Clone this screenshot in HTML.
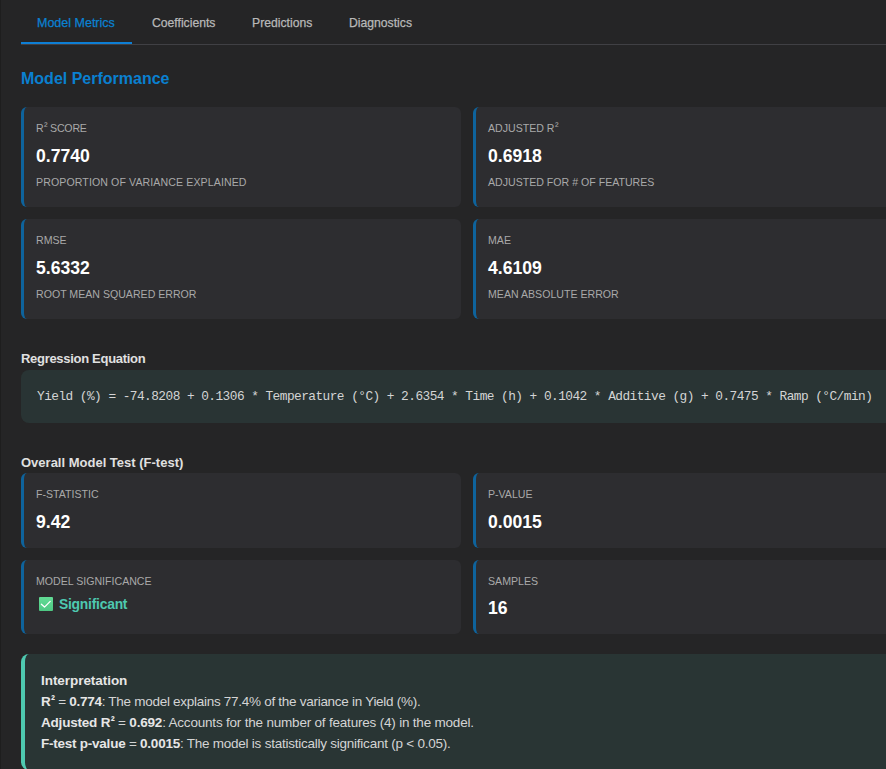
<!DOCTYPE html>
<html><head><meta charset="utf-8">
<style>
*{box-sizing:border-box;margin:0;padding:0}
html,body{width:886px;height:769px;overflow:hidden;background:#252526}
body{position:relative;font-family:"Liberation Sans",sans-serif;color:#cccccc}
.edge{position:absolute;left:0;top:0;width:1px;height:769px;background:#1e1e1e}
.abs{position:absolute;white-space:nowrap}
.tabbar{position:absolute;left:21px;top:44px;width:900px;height:1px;background:#404044}
.tabline{position:absolute;left:21px;top:42px;width:111px;height:2px;background:#0e7fd4}
.tab{position:absolute;top:16px;font-size:12.2px;line-height:14px;color:#b8b8b8;-webkit-text-stroke:0.25px #b8b8b8}
.tab.on{color:#0a82d2;-webkit-text-stroke:0.25px #0a82d2;font-size:12.5px}
.h2{position:absolute;left:21px;font-size:16px;font-weight:bold;color:#0a80d0;line-height:18px}
.h3{position:absolute;left:21px;font-size:13px;font-weight:bold;color:#e0e0e0;line-height:15px}
.card{position:absolute;width:440px;background:#2d2d30;border-left:3px solid #0e639c;border-radius:6px}
.lbl{position:absolute;left:12px;font-size:10.6px;line-height:12px;color:#a9a9a9;white-space:nowrap}
.val{position:absolute;left:12px;font-size:17.6px;line-height:20px;font-weight:bold;color:#ffffff;white-space:nowrap}
.eq{position:absolute;left:21px;top:370px;width:900px;height:53px;background:#293434;border-radius:8px}
.eqt{position:absolute;left:16px;top:20px;font-family:"Liberation Mono",monospace;font-size:12.8px;letter-spacing:-0.54px;line-height:14px;color:#d4d4d4;white-space:nowrap}
.interp{position:absolute;left:21px;top:654px;width:900px;height:116px;background:#293534;border-left:4px solid #4ec9b0;border-radius:8px}
.it{position:absolute;left:16px;font-size:13px;line-height:15px;color:#d4d4d4;white-space:nowrap}
.it b{color:#e6e6e6}
.chk{position:absolute;left:15px;width:14px;height:14px}
.sig{position:absolute;left:35px;top:36.5px;font-size:13.9px;letter-spacing:-0.25px;font-weight:bold;line-height:15px;color:#4ec9b0;white-space:nowrap}
.sp{position:relative;top:-2px;margin-left:0.5px}
.sp2{position:relative;top:-2px;margin-left:0.5px;font-size:12px}
</style></head><body>
<div class="edge"></div>
<div class="tabbar"></div>
<div class="tabline"></div>
<div class="tab on" style="left:37px">Model Metrics</div>
<div class="tab" style="left:152px">Coefficients</div>
<div class="tab" style="left:252px">Predictions</div>
<div class="tab" style="left:349px">Diagnostics</div>

<div class="h2" style="top:70px">Model Performance</div>

<div class="card" style="left:21px;top:107px;height:100px">
  <div class="lbl" style="top:15px;letter-spacing:-0.2px">R<span class="sp">²</span> SCORE</div>
  <div class="val" style="top:39px">0.7740</div>
  <div class="lbl" style="top:69px;letter-spacing:0.1px">PROPORTION OF VARIANCE EXPLAINED</div>
</div>
<div class="card" style="left:473px;top:107px;height:100px">
  <div class="lbl" style="top:15px">ADJUSTED R<span class="sp">²</span></div>
  <div class="val" style="top:39px">0.6918</div>
  <div class="lbl" style="top:69px">ADJUSTED FOR # OF FEATURES</div>
</div>
<div class="card" style="left:21px;top:219px;height:100px">
  <div class="lbl" style="top:15px">RMSE</div>
  <div class="val" style="top:39px">5.6332</div>
  <div class="lbl" style="top:69px">ROOT MEAN SQUARED ERROR</div>
</div>
<div class="card" style="left:473px;top:219px;height:100px">
  <div class="lbl" style="top:15px">MAE</div>
  <div class="val" style="top:39px">4.6109</div>
  <div class="lbl" style="top:69px">MEAN ABSOLUTE ERROR</div>
</div>

<div class="h3" style="top:351px;letter-spacing:-0.3px">Regression Equation</div>
<div class="eq"><div class="eqt">Yield (%) = -74.8208 + 0.1306 * Temperature (°C) + 2.6354 * Time (h) + 0.1042 * Additive (g) + 0.7475 * Ramp (°C/min)</div></div>

<div class="h3" style="top:455px">Overall Model Test (F-test)</div>
<div class="card" style="left:21px;top:473px;height:75px">
  <div class="lbl" style="top:15px">F-STATISTIC</div>
  <div class="val" style="top:39px">9.42</div>
</div>
<div class="card" style="left:473px;top:473px;height:75px">
  <div class="lbl" style="top:15px">P-VALUE</div>
  <div class="val" style="top:39px">0.0015</div>
</div>
<div class="card" style="left:21px;top:560px;height:74px">
  <div class="lbl" style="top:15px">MODEL SIGNIFICANCE</div>
  <svg class="chk" style="top:37px" width="14" height="14" viewBox="0 0 14 14"><defs><linearGradient id="g" x1="0" y1="0" x2="0" y2="1"><stop offset="0" stop-color="#63dc96"/><stop offset="1" stop-color="#4ec883"/></linearGradient></defs><rect width="14" height="14" rx="1" fill="url(#g)"/><path d="M2.4 7.3 L5.5 10.1 L11.2 4.4" stroke="#ffffff" stroke-width="1.3" fill="none" stroke-linecap="round" stroke-linejoin="round"/></svg>
  <div class="sig">Significant</div>
</div>
<div class="card" style="left:473px;top:560px;height:74px">
  <div class="lbl" style="top:15px">SAMPLES</div>
  <div class="val" style="top:38px">16</div>
</div>

<div class="interp">
  <div class="it" style="top:18.6px;font-size:13.5px;letter-spacing:-0.05px"><b>Interpretation</b></div>
  <div class="it" style="top:39.6px;font-size:13.5px;letter-spacing:-0.28px"><b>R<span class="sp2">²</span></b> = <b>0.774</b>: The model explains 77.4% of the variance in Yield (%).</div>
  <div class="it" style="top:60.6px;font-size:13.5px;letter-spacing:-0.2px"><b>Adjusted R<span class="sp2">²</span></b> = <b>0.692</b>: Accounts for the number of features (4) in the model.</div>
  <div class="it" style="top:81.6px;font-size:13.5px;letter-spacing:-0.24px"><b>F-test p-value</b> = <b>0.0015</b>: The model is statistically significant (p &lt; 0.05).</div>
</div>
</body></html>
